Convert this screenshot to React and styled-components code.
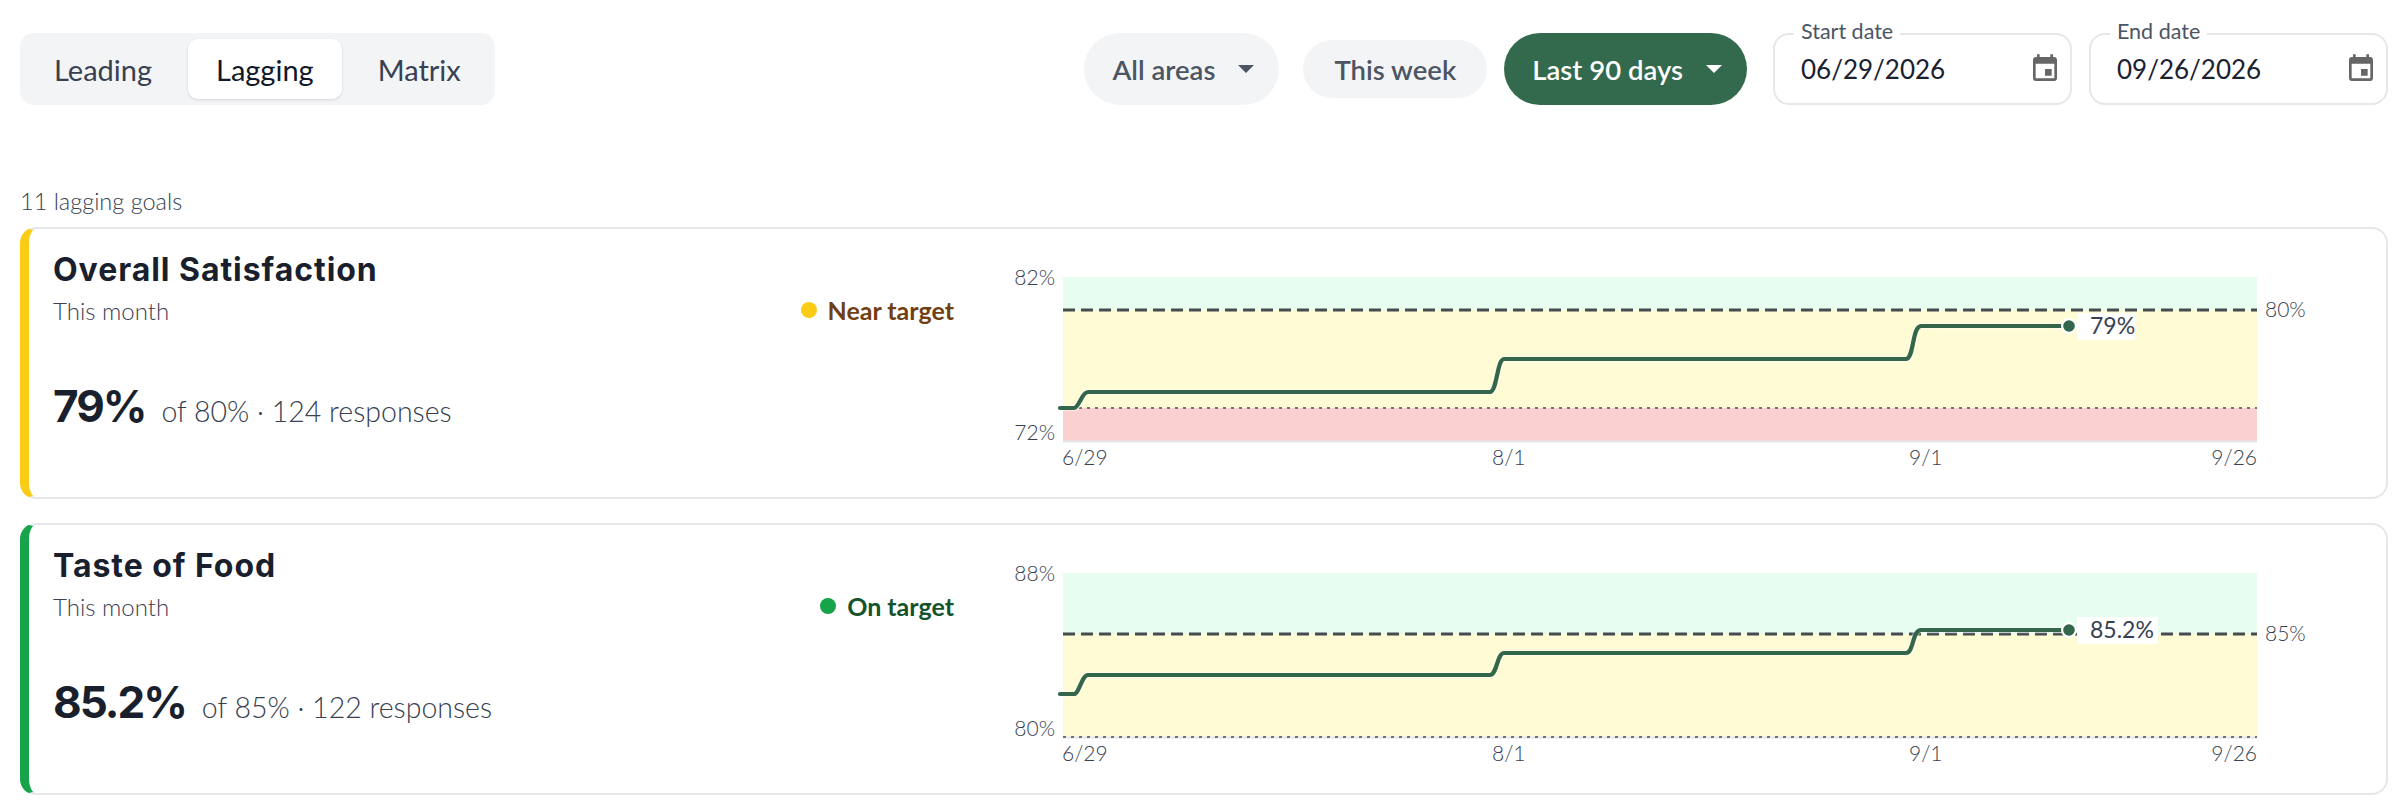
import React from 'react'
import styled, { createGlobalStyle } from 'styled-components'

const GlobalStyle = createGlobalStyle`
  html, body {
    margin: 0;
    padding: 0;
    background: #fff;
    font-family: 'Lato', 'Noto Sans', sans-serif;
  }
`

const goals = [
  {
    title: 'Overall Satisfaction',
    period: 'This month',
    status: 'Near target',
    tone: 'near',
    value: '79%',
    detail: 'of 80% · 124 responses',
    chart: {
      top: '82%',
      bottom: '72%',
      target: '80%',
      targetY: 81,
      floorY: 179,
      steps: [179, 163, 130, 97],
      label: '79%',
      labelWidth: 58,
      zones: [
        { y: 48, h: 33, fill: '#e6fdf0' },
        { y: 81, h: 98, fill: '#fffbd4' },
        { y: 179, h: 33, fill: '#fbd0d0' },
      ],
    },
  },
  {
    title: 'Taste of Food',
    period: 'This month',
    status: 'On target',
    tone: 'on',
    value: '85.2%',
    detail: 'of 85% · 122 responses',
    chart: {
      top: '88%',
      bottom: '80%',
      target: '85%',
      targetY: 109,
      floorY: 212,
      steps: [169, 150, 128, 105],
      label: '85.2%',
      labelWidth: 81,
      zones: [
        { y: 48, h: 61, fill: '#e6fdf0' },
        { y: 109, h: 103, fill: '#fffbd4' },
      ],
    },
  },
]

const tones = {
  near: { bar: '#facc15', text: '#713f12' },
  on: { bar: '#16a34a', text: '#14532d' },
}

const stepPath = ([a, b, c, d]) =>
  `M60 ${a} H74 C79 ${a} 82 ${b} 88 ${b} H490 C497 ${b} 497 ${c} 504 ${c} H906 C914 ${c} 912 ${d} 921 ${d} H1066`

const GoalChart = ({ chart }) => (
  <ChartSvg viewBox="0 0 1385 268">
    {chart.zones.map(z => (
      <rect key={z.y} x="63" y={z.y} width="1194" height={z.h} fill={z.fill} />
    ))}
    <line x1="63" x2="1257" y1="212.5" y2="212.5" stroke="#e5e7eb" strokeWidth="2" />
    <line x1="63" x2="1257" y1={chart.floorY} y2={chart.floorY} stroke="#6b7280" strokeWidth="2" strokeDasharray="3 5" />
    <line x1="63" x2="1257" y1={chart.targetY} y2={chart.targetY} stroke="#454b4f" strokeWidth="3" strokeDasharray="12 6" />
    <path d={stepPath(chart.steps)} fill="none" stroke="#fff" strokeOpacity="0.45" strokeWidth="6.5" />
    <path d={stepPath(chart.steps)} fill="none" stroke="#33664a" strokeWidth="4.2" strokeLinecap="round" />
    <circle cx="1069" cy={chart.steps[3]} r="8" fill="#fff" />
    <circle cx="1069" cy={chart.steps[3]} r="5.8" fill="#33664a" />
    <rect x="1077" y={chart.steps[3] - 13} width={chart.labelWidth} height="27" fill="#fff" />
    <ChartValue x="1090" y={chart.steps[3] + 8}>{chart.label}</ChartValue>
    <ChartText x="55" y="56" textAnchor="end">{chart.top}</ChartText>
    <ChartText x="55" y="211" textAnchor="end">{chart.bottom}</ChartText>
    <ChartText x="1265" y={chart.targetY + 7}>{chart.target}</ChartText>
    <ChartText x="62" y="236">6/29</ChartText>
    <ChartText x="492" y="236">8/1</ChartText>
    <ChartText x="909" y="236">9/1</ChartText>
    <ChartText x="1257" y="236" textAnchor="end">9/26</ChartText>
  </ChartSvg>
)

const CalendarIcon = () => (
  <IconSvg viewBox="0 0 24 24">
    <path d="M17 12h-5v5h5v-5zM16 1v2H8V1H6v2H5c-1.11 0-1.99.9-1.99 2L3 19c0 1.1.89 2 2 2h14c1.1 0 2-.9 2-2V5c0-1.1-.9-2-2-2h-1V1h-2zm3 18H5V8h14v11z" />
  </IconSvg>
)

const App = () => (
  <Page>
    <GlobalStyle />
    <Toolbar>
      <Tabs>
        <Tab>Leading</Tab>
        <Tab active>Lagging</Tab>
        <Tab>Matrix</Tab>
      </Tabs>
      <Filters>
        <Pill tall after={7}>
          All areas
          <Caret />
        </Pill>
        <Pill>This week</Pill>
        <Pill tall selected after={9}>
          Last 90 days
          <Caret selected />
        </Pill>
        <DateField>
          <DateLabel>Start date</DateLabel>
          <DateValue>06/29/2026</DateValue>
          <CalendarIcon />
        </DateField>
        <DateField>
          <DateLabel>End date</DateLabel>
          <DateValue>09/26/2026</DateValue>
          <CalendarIcon />
        </DateField>
      </Filters>
    </Toolbar>
    <Count>11 lagging goals</Count>
    <Cards>
      {goals.map(goal => (
        <Card key={goal.title} tone={goal.tone}>
          <Info>
            <Title>{goal.title}</Title>
            <SubRow>
              <Period>{goal.period}</Period>
              <Status tone={goal.tone}>
                <Dot tone={goal.tone} />
                {goal.status}
              </Status>
            </SubRow>
            <ValueRow>
              <Value>{goal.value}</Value>
              <Detail>{goal.detail}</Detail>
            </ValueRow>
          </Info>
          <GoalChart chart={goal.chart} />
        </Card>
      ))}
    </Cards>
  </Page>
)

export default App

const Page = styled.div`
  box-sizing: border-box;
  width: 2407px;
  height: 802px;
  padding: 33px 19px 0 20px;
  overflow: hidden;
`

const Toolbar = styled.div`
  display: flex;
  justify-content: space-between;
  align-items: center;
  height: 72px;
`

const Tabs = styled.div`
  display: flex;
  gap: 8px;
  padding: 6px;
  height: 72px;
  box-sizing: border-box;
  background: #f3f4f6;
  border-radius: 14px;
`

const Tab = styled.div`
  display: flex;
  align-items: center;
  padding: 0 28px;
  font-size: 29px;
  color: ${props => (props.active ? '#111827' : '#374151')};
  background: ${props => (props.active ? '#fff' : 'transparent')};
  border-radius: 10px;
  box-shadow: ${props => (props.active ? '0 1px 3px rgba(0,0,0,.12)' : 'none')};
`

const Filters = styled.div`
  display: flex;
  align-items: center;
  gap: 17px;
`

const Pill = styled.div`
  display: flex;
  align-items: center;
  gap: 23px;
  box-sizing: border-box;
  height: ${props => (props.tall ? '72px' : '58px')};
  padding: ${props => (props.tall ? '0 25px 0 28px' : '0 31px')};
  margin-right: ${props => props.after || 0}px;
  border-radius: 36px;
  font-size: 27.5px;
  font-weight: 600;
  color: ${props => (props.selected ? '#fff' : '#4b5563')};
  background: ${props => (props.selected ? '#33694c' : '#f3f4f6')};
`

const Caret = styled.span`
  width: 0;
  height: 0;
  border-left: 8px solid transparent;
  border-right: 8px solid transparent;
  border-top: 8px solid ${props => (props.selected ? '#fff' : '#4b5563')};
`

const DateField = styled.div`
  position: relative;
  display: flex;
  align-items: center;
  justify-content: space-between;
  box-sizing: border-box;
  width: 299px;
  height: 72px;
  padding: 0 9px 0 26px;
  border: 2px solid #e5e7eb;
  border-radius: 16px;
`

const DateLabel = styled.span`
  position: absolute;
  top: -16px;
  left: 19px;
  padding: 0 7px;
  background: #fff;
  font-size: 21.5px;
  line-height: 24px;
  color: #4b5563;
`

const DateValue = styled.span`
  font-size: 26px;
  color: #1a2130;
`

const IconSvg = styled.svg`
  width: 32px;
  height: 32px;
  fill: #666;
`

const Count = styled.div`
  margin-top: 81px;
  font-size: 23.5px;
  line-height: 30px;
  font-weight: 300;
  color: #374151;
`

const Cards = styled.div`
  display: flex;
  flex-direction: column;
  gap: 24px;
  margin-top: 11px;
`

const Card = styled.div`
  display: flex;
  box-sizing: border-box;
  height: 272px;
  background: #fff;
  border: 2px solid #e5e7eb;
  border-left: 9px solid ${props => tones[props.tone].bar};
  border-radius: 16px;
`

const Info = styled.div`
  box-sizing: border-box;
  flex: 0 0 970px;
  padding: 22px 45px 0 24px;
`

const Title = styled.div`
  font-family: 'Inter', sans-serif;
  font-size: 32px;
  line-height: 38px;
  font-weight: 700;
  letter-spacing: 0.95px;
  color: #1a1f2e;
`

const SubRow = styled.div`
  display: flex;
  justify-content: space-between;
  align-items: center;
  margin-top: 6px;
  height: 30px;
`

const Period = styled.span`
  font-size: 24px;
  font-weight: 300;
  color: #374151;
`

const Status = styled.span`
  display: flex;
  align-items: center;
  gap: 11px;
  font-size: 25px;
  font-weight: 700;
  color: ${props => tones[props.tone].text};
`

const Dot = styled.span`
  width: 16px;
  height: 16px;
  border-radius: 50%;
  background: ${props => tones[props.tone].bar};
`

const ValueRow = styled.div`
  display: flex;
  align-items: baseline;
  gap: 16px;
  margin-top: 54px;
`

const Value = styled.span`
  font-family: 'Inter', sans-serif;
  font-size: 44px;
  line-height: 54px;
  font-weight: 700;
  letter-spacing: -2px;
  color: #1a1f2e;
`

const Detail = styled.span`
  font-size: 28.5px;
  font-weight: 300;
  color: #374151;
`

const ChartSvg = styled.svg`
  flex: 1;
  display: block;
  min-width: 0;
  height: 268px;
`

const ChartText = styled.text`
  font-family: 'Lato', sans-serif;
  font-size: 21px;
  font-weight: 300;
  fill: #374151;
`

const ChartValue = styled.text`
  font-family: 'Lato', sans-serif;
  font-size: 23px;
  fill: #374151;
`
